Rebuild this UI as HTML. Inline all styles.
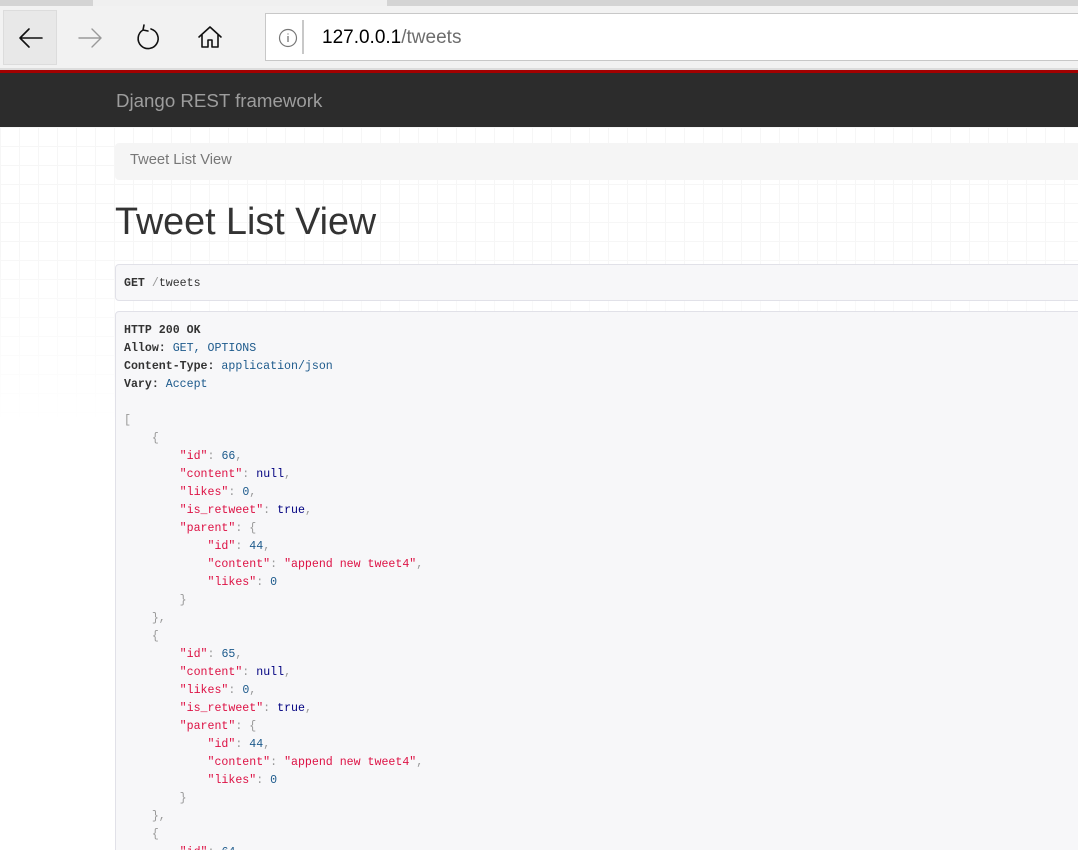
<!DOCTYPE html>
<html style="height:850px;overflow:hidden"><head><meta charset="utf-8"><style>
*{margin:0;padding:0;box-sizing:border-box}
body{width:1078px;height:850px;overflow:hidden;background:#fff;font-family:"Liberation Sans",sans-serif;position:relative}
.tabs{position:absolute;left:0;top:0;width:1078px;height:8px;background:#f0f0f0}
.tabs .a{position:absolute;left:0;top:0;width:93px;height:6px;background:#d4d4d4}
.tabs .b{position:absolute;left:387px;top:0;width:691px;height:6px;background:#d4d4d4}
.bar{position:absolute;left:0;top:6px;width:1078px;height:62px;background:#f2f2f2}
.btn1{position:absolute;left:3px;top:10px;width:54px;height:55px;background:#e8e8e8;border:1px solid #dcdcdc}
.addr{position:absolute;left:265px;top:13px;width:820px;height:48px;background:#fff;border:1px solid #c8c8c8}
.addr .sep{position:absolute;left:36px;top:6px;width:2px;height:34px;background:#c8c8c8}
.addr .url{position:absolute;left:56px;top:13px;font-size:19px;color:#000}
.addr .url span{color:#6d6d6d}
.red{position:absolute;left:0;top:68px;width:1078px;height:5px;background:#a30000;border-top:2px solid #ddd}
.nav{position:absolute;left:0;top:73px;width:1078px;height:54px;background:#2c2c2c}
.nav span{position:absolute;left:116px;top:17px;font-size:18.7px;color:#9d9d9d}
.grid{position:absolute;left:0;top:127px;width:1078px;height:300px;
background-image:linear-gradient(#f6f6f6 1px,transparent 1px),linear-gradient(90deg,#f6f6f6 1px,transparent 1px);background-size:19px 19px;
-webkit-mask-image:linear-gradient(#000 40%,transparent);}
.bc{position:absolute;left:115px;top:143px;width:980px;height:37px;background:#f5f5f5;border-radius:4px;font-size:14.7px;color:#777;padding:9px 15px}
h1{position:absolute;left:115px;top:200px;font-size:37.7px;font-weight:normal;color:#333}
pre{font-family:"Liberation Mono",monospace;font-size:11.6px;line-height:18px;color:#333}
.req{position:absolute;left:115px;top:264px;width:980px;height:37px;background:#f7f7f9;border:1px solid #e1e1e8;border-radius:4px;padding:10px 8px}
.resp{position:absolute;left:115px;top:311px;width:980px;height:560px;background:#f7f7f9;border:1px solid #e1e1e8;border-radius:4px;padding:10px 8px}
b{font-weight:bold}
.m{color:#999}.v{color:#1d5a8c}.k{color:#dd1144}.n{color:#1d5a8c}.l{color:#000080}.p{color:#999}
</style></head><body>
<div class="tabs"><div class="a"></div><div class="b"></div></div>
<div class="bar"></div>
<div class="btn1"></div>
<svg style="position:absolute;left:0;top:0" width="260" height="70" fill="none" stroke-linecap="round" stroke-linejoin="round">
<path d="M20 38H42M20 38l9-9M20 38l9 9" stroke="#111" stroke-width="1.6"/>
<path d="M79 38H101M101 38l-9-9M101 38l-9 9" stroke="#999" stroke-width="1.4"/>
<path d="M143 30a10 10 0 1 0 8 -1M143 30l1-5M143 30l5 1" stroke="#111" stroke-width="1.6"/>
<path d="M199 37l11-10 11 10M202 35v12h6v-7h4v7h6v-12" stroke="#111" stroke-width="1.6"/>
</svg>
<div class="addr"><div class="sep"></div><div class="url">127.0.0.1<span>/tweets</span></div></div>
<svg style="position:absolute;left:278px;top:28px" width="20" height="20"><circle cx="10" cy="10" r="8.5" fill="none" stroke="#777" stroke-width="1.2"/><path d="M10 8v6M10 5.5v1" stroke="#777" stroke-width="1.3"/></svg>
<div class="red"></div>
<div class="nav"><span>Django REST framework</span></div>
<div class="grid"></div>
<div class="bc">Tweet List View</div>
<h1>Tweet List View</h1>
<div class="req"><pre><b>GET</b> <span class="m">/</span>tweets</pre></div>
<div class="resp"><pre><b>HTTP 200 OK</b>
<b>Allow:</b> <span class="v">GET, OPTIONS</span>
<b>Content-Type:</b> <span class="v">application/json</span>
<b>Vary:</b> <span class="v">Accept</span>

<span class="p">[</span>
    <span class="p">{</span>
        <span class="k">"id"</span><span class="p">:</span> <span class="n">66</span><span class="p">,</span>
        <span class="k">"content"</span><span class="p">:</span> <span class="l">null</span><span class="p">,</span>
        <span class="k">"likes"</span><span class="p">:</span> <span class="n">0</span><span class="p">,</span>
        <span class="k">"is_retweet"</span><span class="p">:</span> <span class="l">true</span><span class="p">,</span>
        <span class="k">"parent"</span><span class="p">: {</span>
            <span class="k">"id"</span><span class="p">:</span> <span class="n">44</span><span class="p">,</span>
            <span class="k">"content"</span><span class="p">:</span> <span class="k">"append new tweet4"</span><span class="p">,</span>
            <span class="k">"likes"</span><span class="p">:</span> <span class="n">0</span>
        <span class="p">}</span>
    <span class="p">},</span>
    <span class="p">{</span>
        <span class="k">"id"</span><span class="p">:</span> <span class="n">65</span><span class="p">,</span>
        <span class="k">"content"</span><span class="p">:</span> <span class="l">null</span><span class="p">,</span>
        <span class="k">"likes"</span><span class="p">:</span> <span class="n">0</span><span class="p">,</span>
        <span class="k">"is_retweet"</span><span class="p">:</span> <span class="l">true</span><span class="p">,</span>
        <span class="k">"parent"</span><span class="p">: {</span>
            <span class="k">"id"</span><span class="p">:</span> <span class="n">44</span><span class="p">,</span>
            <span class="k">"content"</span><span class="p">:</span> <span class="k">"append new tweet4"</span><span class="p">,</span>
            <span class="k">"likes"</span><span class="p">:</span> <span class="n">0</span>
        <span class="p">}</span>
    <span class="p">},</span>
    <span class="p">{</span>
        <span class="k">"id"</span><span class="p">:</span> <span class="n">64</span><span class="p">,</span>
</pre></div>
</body></html>
